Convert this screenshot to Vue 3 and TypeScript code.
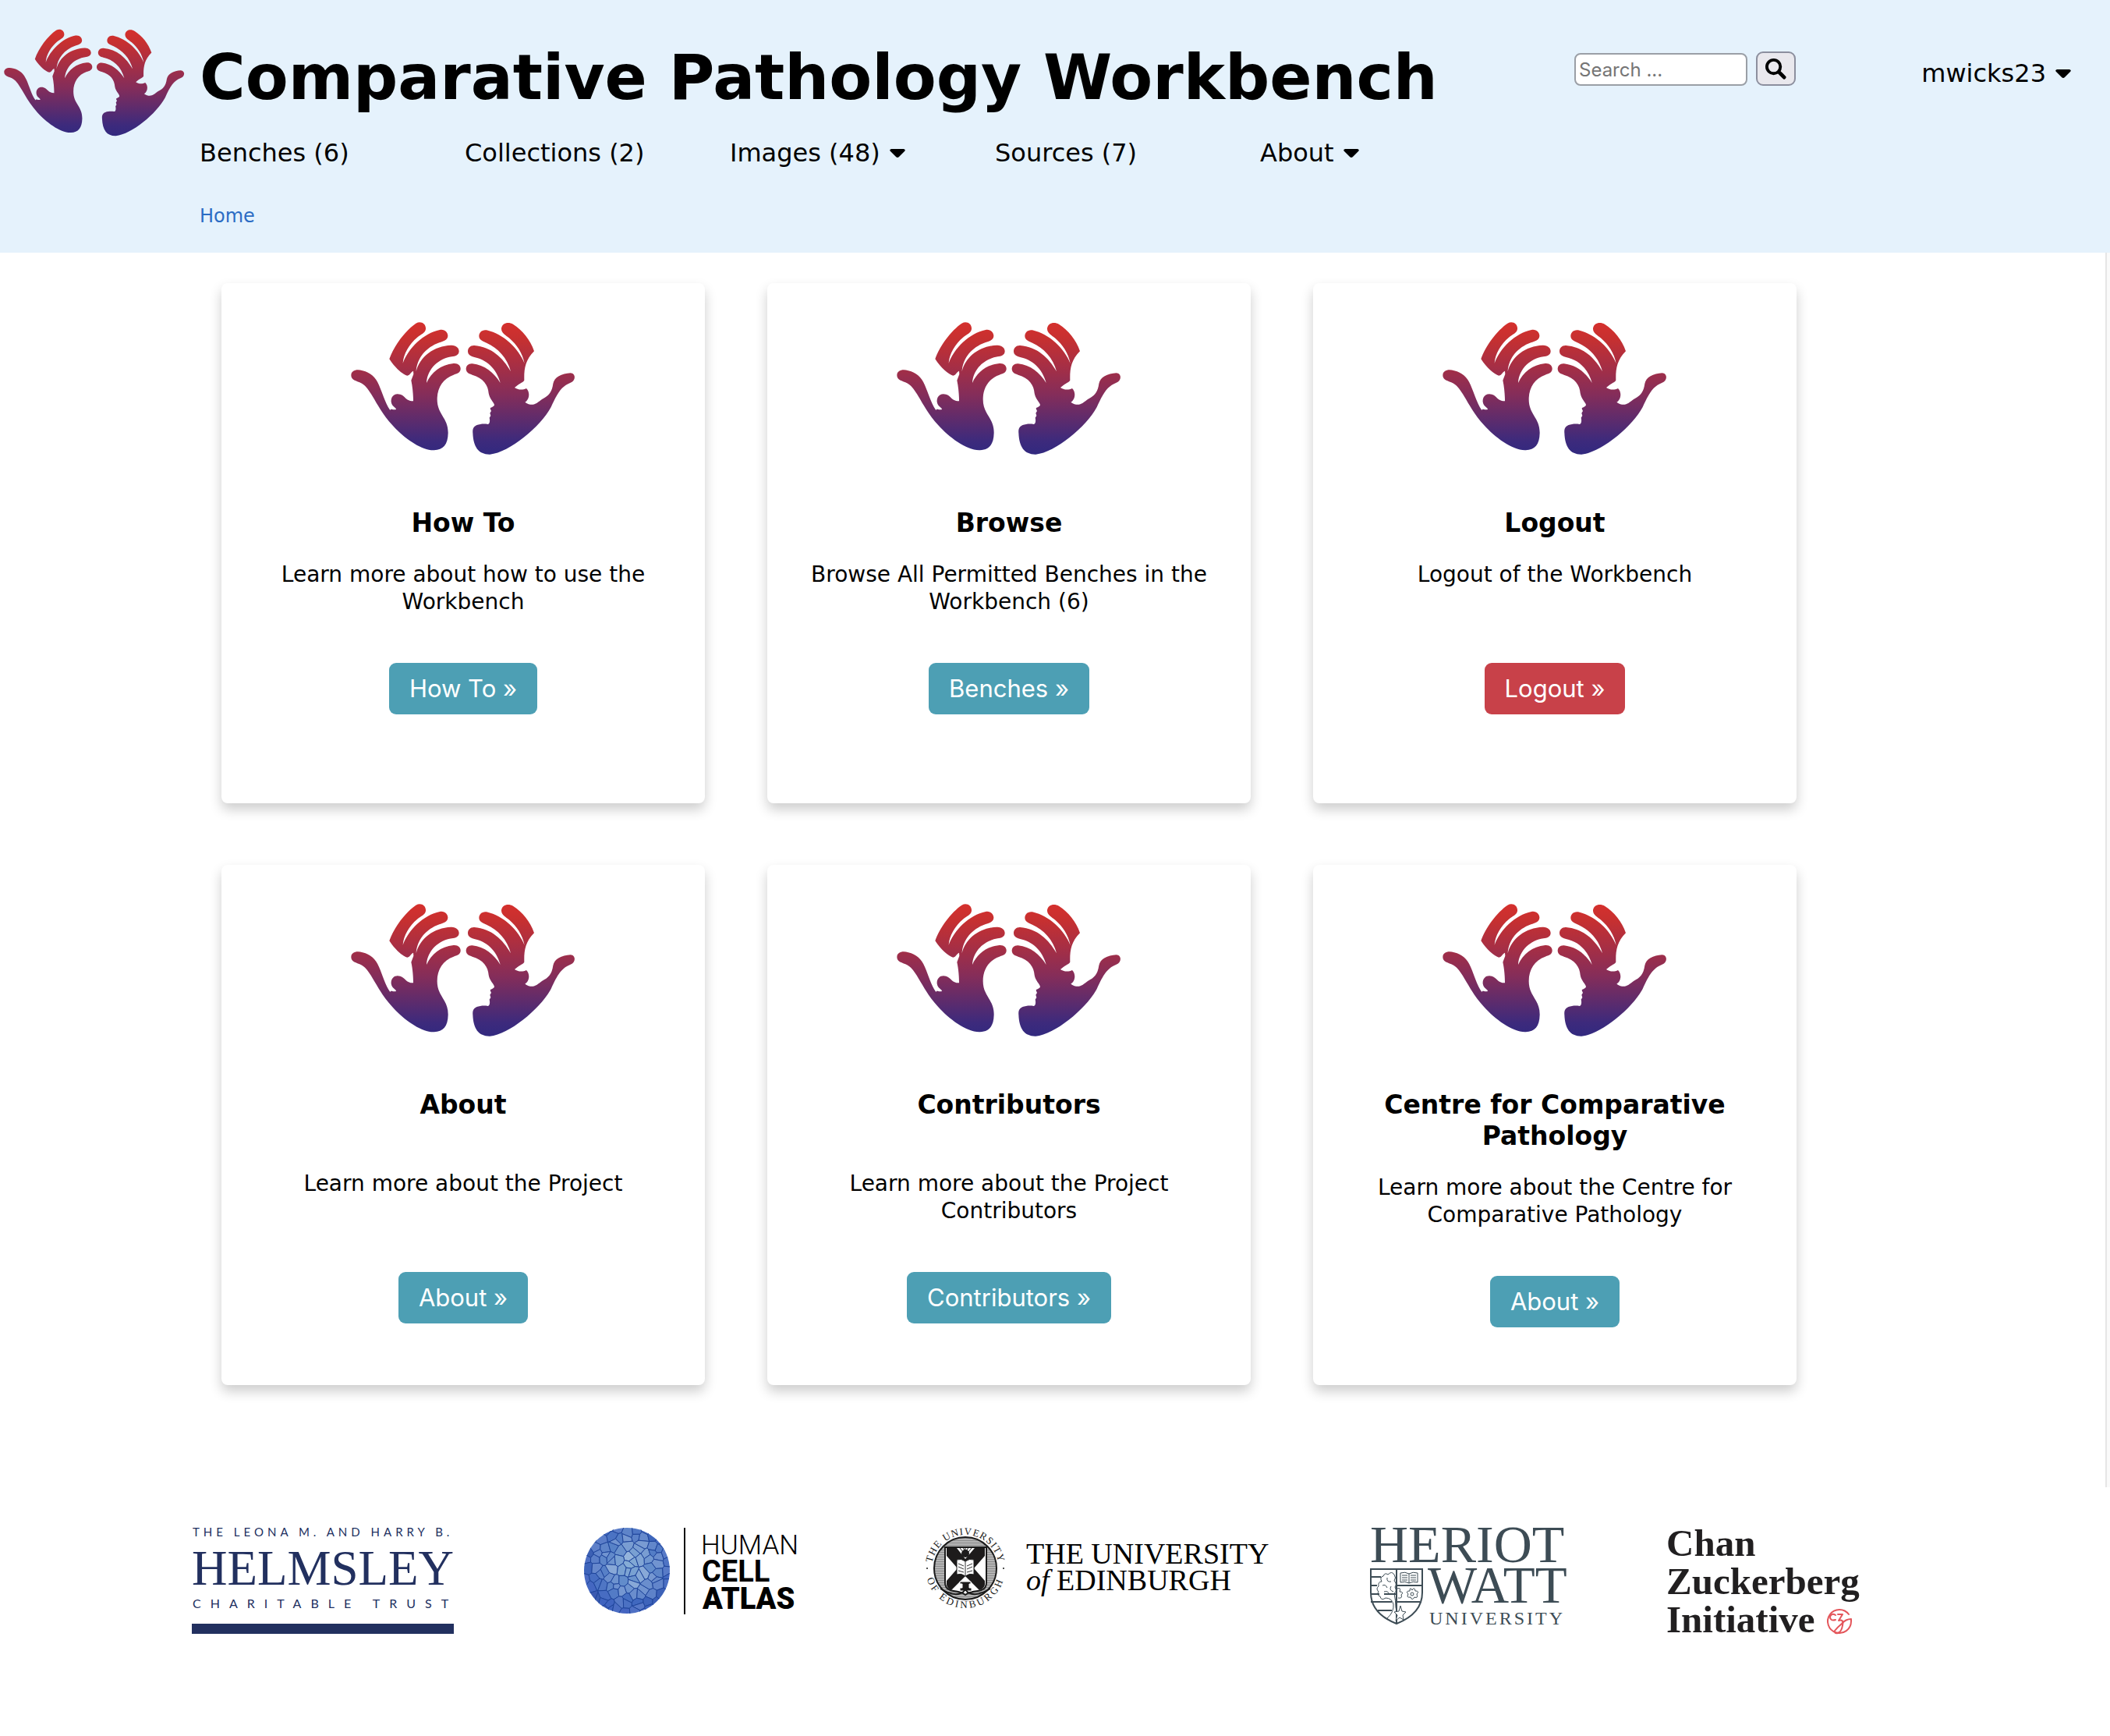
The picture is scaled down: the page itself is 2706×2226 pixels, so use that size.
<script setup lang="ts">
import { ref } from 'vue'

interface NavItem {
  label: string
  menu: boolean
}

interface Card {
  title: string
  text: string
  action: string
  danger?: boolean
}

interface Cell {
  points: string
  fill: string
}

const query = ref('')

const navItems: NavItem[] = [
  { label: 'Benches (6)', menu: false },
  { label: 'Collections (2)', menu: false },
  { label: 'Images (48)', menu: true },
  { label: 'Sources (7)', menu: false },
  { label: 'About', menu: true },
]

const cardRows: Card[][] = [
  [
    { title: 'How To', text: 'Learn more about how to use the Workbench', action: 'How To »' },
    { title: 'Browse', text: 'Browse All Permitted Benches in the Workbench (6)', action: 'Benches »' },
    { title: 'Logout', text: 'Logout of the Workbench', action: 'Logout »', danger: true },
  ],
  [
    { title: 'About', text: 'Learn more about the Project', action: 'About »' },
    { title: 'Contributors', text: 'Learn more about the Project Contributors', action: 'Contributors »' },
    { title: 'Centre for Comparative Pathology', text: 'Learn more about the Centre for Comparative Pathology', action: 'About »' },
  ],
]

// Voronoi mosaic for the cell globe, built by clipping a square against
// the bisector between each seed and every other seed.
type Point = [number, number]

function random(seed: number): () => number {
  let s = seed
  return () => {
    s = (s * 16807) % 2147483647
    return s / 2147483647
  }
}

function buildCells(): Cell[] {
  const next = random(4711)
  const seeds: Point[] = []
  for (let row = 0; row < 11; row++) {
    for (let col = 0; col < 11; col++) {
      seeds.push([(col + next()) * 10.4 - 1, (row + next()) * 10.4 - 1])
    }
  }
  return seeds.map((a) => {
    let poly: Point[] = [[-5, -5], [117, -5], [117, 117], [-5, 117]]
    for (const b of seeds) {
      if (b === a) continue
      const nx = b[0] - a[0]
      const ny = b[1] - a[1]
      const limit = (nx * (a[0] + b[0]) + ny * (a[1] + b[1])) / 2
      const clipped: Point[] = []
      poly.forEach((p, i) => {
        const q = poly[(i + 1) % poly.length]
        const dp = nx * p[0] + ny * p[1] - limit
        const dq = nx * q[0] + ny * q[1] - limit
        if (dp <= 0) clipped.push(p)
        if (dp * dq < 0) {
          const t = dp / (dp - dq)
          clipped.push([p[0] + (q[0] - p[0]) * t, p[1] + (q[1] - p[1]) * t])
        }
      })
      poly = clipped
    }
    const distance = Math.hypot(a[0] - 60, a[1] - 50) / 64
    const light = Math.max(46, Math.min(76, 73 - distance * 25 + (next() - 0.5) * 10))
    const hue = 211 + distance * 13
    return {
      points: poly.map((p) => p.map((v) => v.toFixed(1)).join(',')).join(' '),
      fill: `hsl(${hue.toFixed(0)} 50% ${light.toFixed(0)}%)`,
    }
  })
}

const cells = buildCells()
</script>

<template>
  <svg class="sprite" aria-hidden="true">
    <defs>
      <linearGradient id="hands-fill" gradientUnits="userSpaceOnUse" x1="0" y1="40" x2="0" y2="545">
        <stop offset="0" stop-color="#d5302d" />
        <stop offset="0.12" stop-color="#c73030" />
        <stop offset="0.55" stop-color="#842d5a" />
        <stop offset="0.9" stop-color="#3d2a7c" />
        <stop offset="1" stop-color="#32297f" />
      </linearGradient>
      <symbol id="hands" viewBox="30 38 864 510">
        <path fill="url(#hands-fill)" d="M178 180C195 130 240 70 280 43C300 32 320 45 318 65C316 80 300 85 285 97C255 122 232 160 230 196C250 140 310 80 372 68C392 64 404 80 403 92C402 108 385 112 370 117C320 135 285 175 281 228C295 170 350 130 415 127C435 126 446 138 446 150C446 165 432 170 418 171C370 178 325 215 321 272C340 230 375 203 425 197C442 195 453 206 452 219C451 234 437 237 425 241C385 255 362 290 362 335C362 395 405 405 404 465C403 510 385 530 350 531C300 533 230 480 190 435C135 375 118 320 85 284C65 263 32 268 31 243C31 222 55 218 75 225C105 232 125 250 138 280C152 312 162 350 181 377C184 368 190 378 204 374C204 366 188 365 185 345C183 322 200 310 220 316C240 322 240 342 270 342C270 320 268 290 262 262L271 238L270 226C262 228 258 242 247 244C230 240 200 215 178 180Z" />
        <path fill="url(#hands-fill)" d="M735 150C720 105 690 70 655 47C635 35 612 42 609 62C608 80 625 88 640 100C668 125 690 155 698 197C675 140 620 85 552 69C535 66 523 78 523 92C523 108 540 112 552 118C595 138 632 175 645 228C615 175 570 133 505 128C490 127 480 138 480 150C480 165 492 170 505 173C550 182 590 215 605 272C580 232 545 203 497 198C482 197 473 207 473 219C474 233 485 237 497 241C540 254 558 280 560 312C564 335 580 345 582 357C580 365 566 366 566 371L570 380L565 388L568 398L563 406C566 418 564 430 557 431C545 429 535 430 528 431C505 434 497 445 499 465C501 520 522 548 565 547C640 540 760 440 800 365C825 310 840 285 875 271C897 262 895 235 875 234C840 236 813 250 808 275C803 310 790 322 765 335C745 350 730 366 700 346C715 338 722 310 705 293C690 301 670 298 660 290C675 275 690 272 697 262C696 220 700 185 735 150Z" />
      </symbol>
    </defs>
  </svg>

  <header class="header">
    <a class="brand" href="#" aria-label="Comparative Pathology Workbench home">
      <svg class="brand-logo" aria-hidden="true"><use href="#hands" /></svg>
    </a>
    <div class="header-main">
      <h1 class="title">Comparative Pathology Workbench</h1>
      <nav class="nav" aria-label="Main">
        <template v-for="item in navItems" :key="item.label">
          <button v-if="item.menu" type="button" class="nav-link">
            {{ item.label }}
            <svg class="caret" viewBox="0 0 20 11" aria-hidden="true"><path d="M2 0H18Q21 1 19 3L12 10Q10 12 8 10L1 3Q-1 1 2 0Z" /></svg>
          </button>
          <a v-else class="nav-link" href="#">{{ item.label }}</a>
        </template>
      </nav>
      <nav class="crumbs" aria-label="Breadcrumb"><a href="#">Home</a></nav>
    </div>
    <form class="search" @submit.prevent>
      <input v-model="query" class="search-box" type="text" placeholder="Search ..." aria-label="Search" />
      <button class="search-button" type="submit" aria-label="Submit search">
        <svg viewBox="0 0 28 28" aria-hidden="true">
          <circle cx="11" cy="11" r="9" fill="none" stroke="#000" stroke-width="4" />
          <path d="M18 18L25 25" stroke="#000" stroke-width="5" stroke-linecap="round" />
        </svg>
      </button>
    </form>
    <div class="user">
      <button type="button" class="nav-link">
        mwicks23
        <svg class="caret" viewBox="0 0 20 11" aria-hidden="true"><path d="M2 0H18Q21 1 19 3L12 10Q10 12 8 10L1 3Q-1 1 2 0Z" /></svg>
      </button>
    </div>
  </header>

  <main class="content">
    <section v-for="(row, r) in cardRows" :key="r" class="cards" :class="{ 'cards-tall': r === 1 }">
      <article v-for="card in row" :key="card.title" class="card">
        <svg class="card-logo" aria-hidden="true"><use href="#hands" /></svg>
        <h2 class="card-title">{{ card.title }}</h2>
        <p class="card-text">{{ card.text }}</p>
        <a class="card-button" :class="{ danger: card.danger }" href="#">{{ card.action }}</a>
      </article>
    </section>
  </main>

  <footer class="partners">
    <a href="#" class="partner helmsley" aria-label="Helmsley Charitable Trust">
      <svg width="340" height="144" viewBox="0 0 340 144">
        <g fill="#22305f">
          <text x="1" y="13" class="sans track-five" font-size="15">THE LEONA M. AND HARRY B.</text>
          <text x="0" y="75" class="serif" font-size="63">HELMSLEY</text>
          <text x="1" y="105" class="sans track-twelve" font-size="16">CHARITABLE TRUST</text>
          <rect x="0" y="125" width="336" height="13" />
        </g>
      </svg>
    </a>
    <a href="#" class="partner atlas" aria-label="Human Cell Atlas">
      <svg width="276" height="114" viewBox="0 0 276 114">
        <defs><clipPath id="globe"><circle cx="56" cy="57" r="55" /></clipPath></defs>
        <g clip-path="url(#globe)" stroke="#1f459b" stroke-width="1" stroke-linejoin="round">
          <polygon v-for="(cell, i) in cells" :key="i" :points="cell.points" :fill="cell.fill" />
        </g>
        <rect x="129" y="2" width="2" height="111" fill="#111" />
        <text x="151" y="36" class="roboto" font-size="35" font-weight="300">HUMAN</text>
        <text x="152" y="71" class="roboto" font-size="38" font-weight="700">CELL</text>
        <text x="153" y="106" class="roboto" font-size="38" font-weight="900">ATLAS</text>
      </svg>
    </a>
    <a href="#" class="partner edinburgh" aria-label="The University of Edinburgh">
      <svg width="441" height="114" viewBox="0 0 441 114">
        <defs>
          <path id="ring-top" d="M9 54A43 43 0 0 1 95 54" />
          <path id="ring-bottom" d="M1 54A51 51 0 0 0 103 54" />
          <pattern id="hatch" width="4" height="3" patternUnits="userSpaceOnUse">
            <rect width="4" height="3" fill="#b4b4b4" /><rect width="4" height="1" fill="#8c8c8c" />
          </pattern>
        </defs>
        <circle cx="52" cy="54" r="40" fill="url(#hatch)" stroke="#1a1a1a" stroke-width="2" />
        <path d="M26 27H79V72Q79 82 68 83Q57 84 52 88Q47 84 37 83Q26 82 26 72Z" fill="#fff" stroke="#1a1a1a" stroke-width="2" />
        <path d="M28 28H41L52 42L64 28H77V42L65 54L77 68V74Q77 80 70 82L52 64L34 82Q28 80 28 74V68L40 54L28 42Z" fill="#1d1b1b" />
        <path d="M28 38L42 54L28 70ZM77 38L63 54L77 70Z" fill="#fff" />
        <path d="M41 43Q47 41 52 45Q57 41 63 43V62Q57 60 52 64Q47 60 41 62Z" fill="#fff" stroke="#1a1a1a" stroke-width="1" />
        <path d="M52 45V63M43 48L50 51M43 52L50 55M43 57L50 59M61 48L54 51M61 52L54 55M61 57L54 59" stroke="#333" stroke-width="1" fill="none" />
        <circle cx="52" cy="35" r="5" fill="#1d1b1b" />
        <path d="M45 28L49 33M49 27L51 31M52 27V31M56 27L54 31M60 28L56 33" stroke="#1d1b1b" stroke-width="1" />
        <path d="M45 71H59V74H57V79H60V83H45V79H48V74H45Z" fill="#1d1b1b" stroke="#fff" stroke-width="1" />
        <path d="M20 80Q36 90 46 86Q50 85 52 80Q54 85 58 86Q68 90 84 80" fill="none" stroke="#1a1a1a" stroke-width="2" />
        <circle cx="3" cy="54" r="1" fill="#1a1a1a" />
        <circle cx="101" cy="54" r="1" fill="#1a1a1a" />
        <g class="serif" fill="#1a1a1a" font-size="13">
          <text class="track-one"><textPath href="#ring-top" startOffset="50%" text-anchor="middle">THE UNIVERSITY</textPath></text>
          <text class="track-three"><textPath href="#ring-bottom" startOffset="50%" text-anchor="middle">OF EDINBURGH</textPath></text>
        </g>
        <text x="130" y="48" class="serif" font-size="38">THE UNIVERSITY</text>
        <text x="130" y="82" class="serif" font-size="38"><tspan font-style="italic">of</tspan> EDINBURGH</text>
      </svg>
    </a>
    <a href="#" class="partner heriot" aria-label="Heriot-Watt University">
      <svg width="251" height="130" viewBox="0 0 251 130">
        <g fill="#3d4c55">
          <text x="0" y="46" class="serif" font-size="68">HERIOT</text>
          <text x="74" y="98" class="serif" font-size="67">WATT</text>
          <text x="76" y="126" class="serif track-three" font-size="24">UNIVERSITY</text>
        </g>
        <g fill="none" stroke="#3d4c55" stroke-width="1">
          <path stroke-width="2" d="M1 55H67V85Q67 112 34 125Q1 112 1 85Z" />
          <path stroke-width="2" d="M34 55V125M1 65H14M1 76H9M1 87H12M1 97H28M34 76H67M34 97H64M10 108H28M18 87H34" />
          <path d="M39 60Q45 58 50 61Q55 58 61 60V72Q55 70 50 73Q45 70 39 72ZM50 61V73M41 63H48M41 66H48M41 69H48M52 63H59M52 66H59M52 69H59" />
          <path d="M22 118Q31 110 30 100Q28 92 20 92Q14 96 13 90Q8 88 11 84Q7 80 11 77Q10 71 15 71Q12 65 17 64Q19 59 23 62Q28 57 31 62Q34 66 31 70Q35 74 32 78Q35 84 31 86Q33 96 33 104Q34 112 40 117M16 76Q20 74 22 79M22 66Q21 72 27 71M18 84Q24 82 24 88M27 77Q24 82 30 84" />
          <path d="M54 82Q57 77 58 83Q64 83 60 87Q62 93 57 91Q54 96 52 91Q46 92 49 87Q45 83 51 83Q51 77 54 82ZM54 85A2 2 0 1 0 54 89A2 2 0 1 0 54 85ZM35 80Q40 78 38 84Q44 84 40 88Q42 93 36 92" />
          <path d="M39 102L41 109L46 110L42 114L43 120L38 117L33 121L35 114L31 110L37 109Z" fill="#fff" />
        </g>
      </svg>
    </a>
    <a href="#" class="partner czi" aria-label="Chan Zuckerberg Initiative">
      <svg width="252" height="150" viewBox="0 0 252 150">
        <g fill="#211f20" class="serif" font-size="49" font-weight="700">
          <text x="-1" y="38">Chan</text>
          <text x="-1" y="87">Zuckerberg</text>
          <text x="-1" y="136">Initiative</text>
        </g>
        <g fill="none" stroke="#e4565b" stroke-width="2" stroke-linecap="round" stroke-linejoin="round">
          <path d="M233 113A15 15 0 1 0 236 122L236 119Q229 119 224 125Q218 130 215 134Q214 138 219 137Q224 135 225 127" />
          <path d="M216 114Q211 111 209 116Q209 122 216 120M219 113H225L220 121Q227 119 225 127" />
        </g>
      </svg>
    </a>
  </footer>
</template>

<style>
body {
  background: #fff;
}
</style>

<style scoped>
.sprite {
  position: absolute;
  width: 0;
  height: 0;
}

.header,
.content {
  font-family: Verdana, 'DejaVu Sans', sans-serif;
  color: #000;
}

a {
  text-decoration: none;
  color: inherit;
}

.header {
  display: flex;
  align-items: flex-start;
  padding-bottom: 30px;
  background: #e5f2fc;
}

.brand {
  width: 251px;
  padding: 37px 0 0 5px;
}

.brand-logo {
  display: block;
  width: 232px;
  height: 138px;
}

.header-main {
  flex: 1;
  padding-top: 52px;
}

.title {
  margin: 0;
  font-size: 80px;
  line-height: 96px;
  font-weight: 700;
  white-space: nowrap;
}

.nav {
  display: grid;
  grid-template-columns: repeat(5, 340px);
  margin-top: 28px;
}

.nav-link {
  display: flex;
  align-items: center;
  gap: 12px;
  padding: 0;
  border: 0;
  background: none;
  color: #000;
  font: inherit;
  font-size: 32px;
  line-height: 40px;
}

.caret {
  width: 20px;
  height: 11px;
}

.crumbs {
  margin-top: 44px;
  font-size: 24px;
  line-height: 34px;
}

.crumbs a {
  color: #2b6cc4;
}

.search {
  display: flex;
  align-items: flex-end;
  gap: 11px;
  padding-top: 66px;
}

.search-box {
  box-sizing: border-box;
  width: 222px;
  height: 42px;
  padding: 0 4px;
  border: 2px solid #9a9fa6;
  border-radius: 8px;
  background: #fff;
  font-family: Inter, sans-serif;
  font-size: 24px;
}

.search-box::placeholder {
  color: #757575;
}

.search-button {
  display: flex;
  align-items: center;
  justify-content: center;
  box-sizing: border-box;
  width: 51px;
  height: 44px;
  padding: 0;
  border: 2px solid #8c8f9e;
  border-radius: 9px;
  background: #e9e8ed;
}

.search-button svg {
  width: 27px;
  height: 27px;
}

.user {
  display: flex;
  justify-content: flex-end;
  box-sizing: border-box;
  width: 403px;
  padding: 74px 50px 0 0;
}

.content {
  display: flex;
  flex-direction: column;
  gap: 79px;
  margin-right: 4px;
  padding: 39px 396px 131px 284px;
  border-right: 2px solid #e6e6e6;
  box-shadow: 4px 0 #fafafa;
}

.cards {
  display: grid;
  grid-template-columns: repeat(3, 1fr);
  gap: 80px;
}

.card {
  display: flex;
  flex-direction: column;
  align-items: center;
  box-sizing: border-box;
  min-height: 667px;
  padding: 50px 40px;
  border-radius: 8px;
  background: #fff;
  box-shadow: 0 8px 16px rgba(0, 0, 0, 0.2);
  text-align: center;
}

.card-logo {
  width: 288px;
  height: 170px;
}

.card-title {
  margin: 68px 0 0;
  font-size: 33px;
  line-height: 40px;
  font-weight: 700;
}

.cards-tall .card-title {
  min-height: 75px;
}

.card-text {
  min-height: 70px;
  margin: 28px 0 0;
  font-size: 28px;
  line-height: 35px;
}

.card-button {
  margin-top: 61px;
  padding: 0 26px;
  border-radius: 9px;
  background: #4d9fb4;
  color: #fff;
  font-family: Inter, sans-serif;
  font-size: 31px;
  line-height: 66px;
}

.card-button.danger {
  background: #c84149;
}

.partners {
  display: flex;
  align-items: flex-start;
  gap: 130px;
  padding: 50px 0 120px 246px;
}

.partner svg {
  display: block;
  overflow: visible;
}

.helmsley,
.atlas {
  padding-right: 32px;
}

.serif {
  font-family: 'Liberation Serif', serif;
}

.sans {
  font-family: Lato, sans-serif;
}

.roboto {
  font-family: Roboto, sans-serif;
}

.track-one {
  letter-spacing: 1px;
}

.track-three {
  letter-spacing: 3px;
}

.track-five {
  letter-spacing: 5px;
}

.track-twelve {
  letter-spacing: 12px;
}
</style>
